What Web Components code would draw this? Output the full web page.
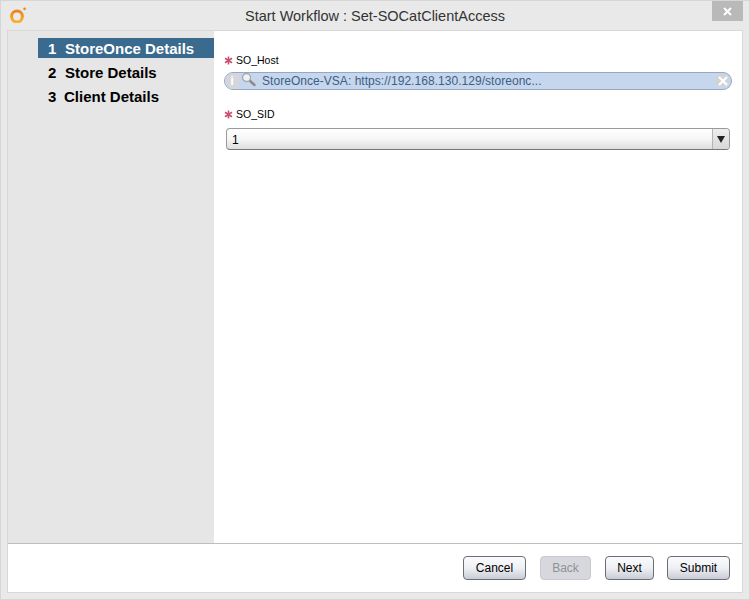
<!DOCTYPE html>
<html>
<head>
<meta charset="utf-8">
<style>
  html, body { margin: 0; padding: 0; }
  body { width: 750px; height: 600px; overflow: hidden; font-family: "Liberation Sans", Arial, sans-serif; }
</style>
</head>
<body>
<wf-window heading="Start Workflow : Set-SOCatClientAccess">
  <wf-steps slot="side">
    <wf-step num="1" active>StoreOnce Details</wf-step>
    <wf-step num="2">Store Details</wf-step>
    <wf-step num="3">Client Details</wf-step>
  </wf-steps>
  <wf-field slot="main" label="SO_Host"><wf-lookup value="StoreOnce-VSA: https://192.168.130.129/storeonc..."></wf-lookup></wf-field>
  <wf-field slot="main" label="SO_SID" gap="7"><wf-select value="1"></wf-select></wf-field>
  <wf-button slot="foot" width="63">Cancel</wf-button>
  <wf-button slot="foot" width="51" disabled>Back</wf-button>
  <wf-button slot="foot" width="49">Next</wf-button>
  <wf-button slot="foot" width="63" style="margin-left:-1px">Submit</wf-button>
</wf-window>
<script>
class WfWindow extends HTMLElement {
  connectedCallback() {
    this.attachShadow({ mode: 'open' });
    this.shadowRoot.innerHTML = `
      <style>
        :host { display: flex; flex-direction: column; box-sizing: border-box; width: 750px; height: 600px; background: #e9e9e9; border: 1px solid #d6d6d6; }
        .bar { height: 29px; display: flex; align-items: flex-start; position: relative; }
        .logo { margin: 5px 0 0 9px; width: 17px; height: 17px; }
        .title { position: absolute; left: 0; right: 0; top: 7px; text-align: center; font-size: 14.5px; line-height: 16px; color: #333; }
        .close { position: absolute; right: 6px; top: 0; width: 31px; height: 20px; background: #b9b9b9; display: flex; align-items: center; justify-content: center; }
        .frame { flex: 1; margin: 0 6px 6px 6px; border: 1px solid #d8d8d8; background: #fff; display: flex; flex-direction: column; min-height: 0; }
        .body { flex: 1; display: flex; min-height: 0; }
        .side { width: 206px; background: #e6e6e6; padding-top: 7px; box-sizing: border-box; }
        .main { flex: 1; padding: 22px 10px 0 10px; }
        .foot { flex: none; border-top: 1px solid #bdbdbd; display: flex; justify-content: flex-end; align-items: flex-start; gap: 14px; padding: 12px 12px 0 0; height: 36px; }
      </style>
      <div class="bar">
        <svg class="logo" viewBox="0 0 17 17">
          <defs><linearGradient id="ring" x1="0" y1="0" x2="0" y2="1"><stop offset="0" stop-color="#ee8420"/><stop offset="1" stop-color="#f9b12c"/></linearGradient></defs>
          <circle cx="7" cy="10.5" r="5.4" fill="none" stroke="url(#ring)" stroke-width="3"/>
          <circle cx="14.6" cy="2.8" r="1.4" fill="#ee8a1a"/>
        </svg>
        <div class="title">${this.getAttribute('heading')}</div>
        <div class="close">
          <svg width="9" height="9" viewBox="0 0 9 9"><path d="M1 1 L8 8 M8 1 L1 8" stroke="#fff" stroke-width="2"/></svg>
        </div>
      </div>
      <div class="frame">
        <div class="body">
          <div class="side"><slot name="side"></slot></div>
          <div class="main"><slot name="main"></slot></div>
        </div>
        <div class="foot"><slot name="foot"></slot></div>
      </div>
    `;
  }
}
customElements.define('wf-window', WfWindow);

class WfSteps extends HTMLElement {
  connectedCallback() {
    this.attachShadow({ mode: 'open' });
    this.shadowRoot.innerHTML = `
      <style>
        :host { display: flex; flex-direction: column; gap: 4px; padding-left: 30px; }
      </style>
      <slot></slot>
    `;
  }
}
customElements.define('wf-steps', WfSteps);

class WfStep extends HTMLElement {
  connectedCallback() {
    this.attachShadow({ mode: 'open' });
    const on = this.hasAttribute('active');
    const num = this.getAttribute('num');
    this.shadowRoot.innerHTML = `
      <style>
        :host { display: flex; height: 20px; line-height: 21px; font-size: 15px; font-weight: bold; color: ${on ? '#fff' : '#000'}; background: ${on ? '#3a6a8e' : 'transparent'}; padding-left: 10px; }
        .n { width: ${num === '3' ? 16 : 17}px; }
      </style>
      <span class="n">${num}</span><slot></slot>
    `;
  }
}
customElements.define('wf-step', WfStep);

class WfField extends HTMLElement {
  connectedCallback() {
    this.attachShadow({ mode: 'open' });
    this.shadowRoot.innerHTML = `
      <style>
        :host { display: block; margin-bottom: 17px; }
        .label { display: flex; align-items: center; height: 14px; font-size: 10.5px; color: #000; gap: 3px; margin-bottom: ${this.getAttribute('gap') || 5}px; }
      </style>
      <div class="label">
        <svg width="9" height="9" viewBox="0 0 9 9"><path d="M4.5 .5 V8.5 M1 2.3 L8 6.7 M8 2.3 L1 6.7" stroke="#c8506e" stroke-width="1.6"/></svg>
        <span>${this.getAttribute('label')}</span>
      </div>
      <slot></slot>
    `;
  }
}
customElements.define('wf-field', WfField);

class WfLookup extends HTMLElement {
  connectedCallback() {
    this.attachShadow({ mode: 'open' });
    this.shadowRoot.innerHTML = `
      <style>
        :host { display: flex; align-items: center; box-sizing: border-box; height: 18px; background: #c6d6ec; border: 1px solid #95a8c8; border-radius: 9px; position: relative; font-size: 12px; color: #3c5f86; }
        .i { width: 14px; height: 16px; border-radius: 8px 0 0 8px; background: #d4d6da; color: #fff; font: bold 13px "Liberation Sans", Arial, sans-serif; text-align: center; line-height: 16px; flex: none; }
        .mag { margin: -3px 6px 0 2px; flex: none; }
        .x { position: absolute; right: 2px; top: 1px; width: 13px; height: 13px; border-radius: 50%; background: #d3d3d3; display: flex; align-items: center; justify-content: center; }
        .t { letter-spacing: .04px; white-space: nowrap; }
      </style>
      <span class="i">i</span>
      <svg class="mag" width="15" height="15" viewBox="0 0 15 15">
        <path d="M8.5 8.5 L13.5 13" stroke="#8a8a8a" stroke-width="2.4" stroke-linecap="round"/>
        <circle cx="5.5" cy="5.5" r="4" fill="#eef2f7" stroke="#a9a9a9" stroke-width="1.3"/>
      </svg>
      <span class="t">${this.getAttribute('value')}</span>
      <span class="x"><svg width="10" height="10" viewBox="0 0 10 10"><path d="M1 1 L9 9 M9 1 L1 9" stroke="#fff" stroke-width="2.2"/></svg></span>
    `;
  }
}
customElements.define('wf-lookup', WfLookup);

class WfSelect extends HTMLElement {
  connectedCallback() {
    this.attachShadow({ mode: 'open' });
    this.shadowRoot.innerHTML = `
      <style>
        :host { display: flex; box-sizing: border-box; height: 22px; margin: 0 2px; border: 1px solid #9a9a9a; border-bottom-color: #777; border-radius: 4px; background: linear-gradient(#fff, #f6f6f6 50%, #dedede); font-size: 12px; color: #000; }
        .v { flex: 1; padding-left: 5px; line-height: 22px; }
        .arrow { width: 16px; border-left: 1px solid #b5b5b5; background: linear-gradient(#eee, #d8d8d8); border-radius: 0 3px 3px 0; display: flex; align-items: center; justify-content: center; }
      </style>
      <span class="v">${this.getAttribute('value')}</span>
      <span class="arrow"><svg width="8" height="7" viewBox="0 0 8 7"><path d="M0 0 H8 L4 7 Z" fill="#222"/></svg></span>
    `;
  }
}
customElements.define('wf-select', WfSelect);

class WfButton extends HTMLElement {
  connectedCallback() {
    this.attachShadow({ mode: 'open' });
    const off = this.hasAttribute('disabled');
    this.shadowRoot.innerHTML = `
      <style>
        :host { display: inline-flex; align-items: center; justify-content: center; box-sizing: border-box; height: 24px; width: ${this.getAttribute('width')}px; border: 1px solid ${off ? '#c6c8cc' : '#6b6e74'}; border-radius: 4px; font-size: 12px; color: ${off ? '#8f9196' : '#000'}; background: ${off ? '#d6d8dd' : 'linear-gradient(#fbfbfd, #eef0f4 50%, #c9ccd6)'}; }
      </style>
      <slot></slot>
    `;
  }
}
customElements.define('wf-button', WfButton);
</script>
</body>
</html>
